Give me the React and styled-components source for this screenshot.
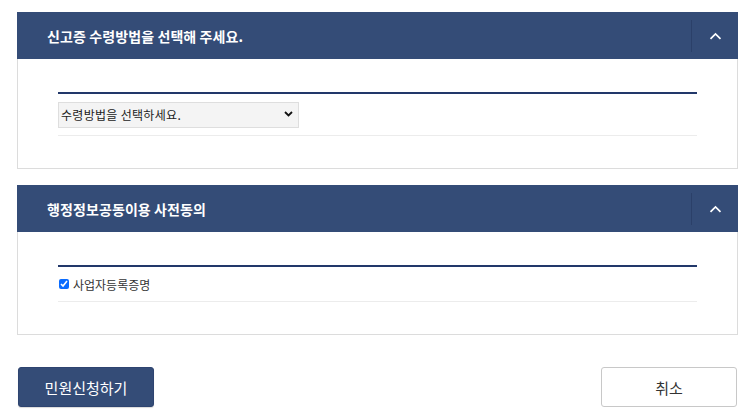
import React from "react";
import styled, { createGlobalStyle } from "styled-components";

const Global = createGlobalStyle`
  html, body { margin: 0; padding: 0; background: #fff; }
  body { font-family: "Noto Sans CJK KR", "Noto Sans", sans-serif; color: #333; }
  * { box-sizing: border-box; }
`;

const Page = styled.div`
  width: 750px;
  padding: 12px 12px 10px 17px;
  display: flex;
  flex-direction: column;
`;

const Panel = styled.section`
  display: flex;
  flex-direction: column;
  & + & { margin-top: 16px; }
`;

const Header = styled.div`
  height: 47px;
  background: #344c77;
  display: flex;
  align-items: center;
  justify-content: space-between;
`;

const Title = styled.h3`
  margin: 0 0 0 30px;
  font-size: 14px;
  font-weight: 700;
  color: #fff;
  letter-spacing: 0.1px;
  line-height: 1;
`;

const Toggle = styled.button`
  width: 47px;
  height: 32px;
  margin-top: 1px;
  padding: 0;
  border: 0;
  border-left: 1px solid #2b4069;
  background: transparent;
  display: flex;
  align-items: center;
  justify-content: center;
  cursor: pointer;
`;

const Body = styled.div`
  border: 1px solid #dcdcdc;
  border-top: 0;
  padding: 33px 40px 32px;
`;

const Table = styled.div`
  border-top: 2px solid #22386a;
`;

const Row = styled.div`
  display: flex;
  align-items: center;
  border-bottom: 1px solid #ececec;
  padding: ${(p) => p.$pad};
  min-height: ${(p) => p.$h};
`;

const SelectWrap = styled.div`
  position: relative;
  width: 241px;
  height: 26px;
`;

const Select = styled.select`
  appearance: none;
  -webkit-appearance: none;
  width: 100%;
  height: 100%;
  border: 1px solid #dedede;
  background: #f4f4f4;
  font-family: "Noto Sans CJK KR", sans-serif;
  font-size: 12px;
  letter-spacing: 0.3px;
  color: #222;
  padding: 0 24px 0 2px;
  outline: none;
  border-radius: 0;
`;

const Arrow = styled.svg`
  position: absolute;
  right: 6px;
  top: 50%;
  margin-top: -3px;
  pointer-events: none;
`;

const CheckLabel = styled.label`
  display: flex;
  align-items: center;
  font-size: 12px;
  color: #333;
  cursor: pointer;
`;

const Check = styled.input`
  width: 10px;
  height: 10px;
  margin: 0 4px 0 1px;
  accent-color: #0a6cff;
`;

const Actions = styled.div`
  display: flex;
  justify-content: space-between;
  margin: 32px 1px 0 1px;
`;

const Button = styled.button`
  width: 136px;
  height: 40px;
  border-radius: 3px;
  font-family: "Noto Sans CJK KR", sans-serif;
  font-size: 15px;
  cursor: pointer;
  background: ${(p) => (p.$primary ? "#344c77" : "#fff")};
  color: ${(p) => (p.$primary ? "#fff" : "#333")};
  border: 1px solid ${(p) => (p.$primary ? "#2e4470" : "#c8c8c8")};
  box-shadow: ${(p) => (p.$primary ? "0 1px 1px rgba(0,0,0,0.15)" : "none")};
`;

const Chevron = () => (
  <svg width="13" height="8" viewBox="0 0 13 8">
    <path d="M1.5 6.8 L6.5 1.9 L11.5 6.8" fill="none" stroke="#fff" strokeWidth="1.7" />
  </svg>
);

function Section({ title, children }) {
  return (
    <Panel>
      <Header>
        <Title>{title}</Title>
        <Toggle aria-label="접기">
          <Chevron />
        </Toggle>
      </Header>
      <Body>
        <Table>{children}</Table>
      </Body>
    </Panel>
  );
}

export default function App() {
  return (
    <>
      <Global />
      <Page>
        <Section title="신고증 수령방법을 선택해 주세요.">
          <Row $pad="7px 0 8px" $h="41px">
            <SelectWrap>
              <Select defaultValue="">
                <option value="">수령방법을 선택하세요.</option>
              </Select>
              <Arrow width="9" height="6" viewBox="0 0 9 6">
                <path d="M1 1 L4.5 4.5 L8 1" fill="none" stroke="#111" strokeWidth="1.8" />
              </Arrow>
            </SelectWrap>
          </Row>
        </Section>
        <Section title="행정정보공동이용 사전동의">
          <Row $pad="0" $h="35px">
            <CheckLabel>
              <Check type="checkbox" defaultChecked />
              사업자등록증명
            </CheckLabel>
          </Row>
        </Section>
        <Actions>
          <Button $primary>민원신청하기</Button>
          <Button>취소</Button>
        </Actions>
      </Page>
    </>
  );
}
